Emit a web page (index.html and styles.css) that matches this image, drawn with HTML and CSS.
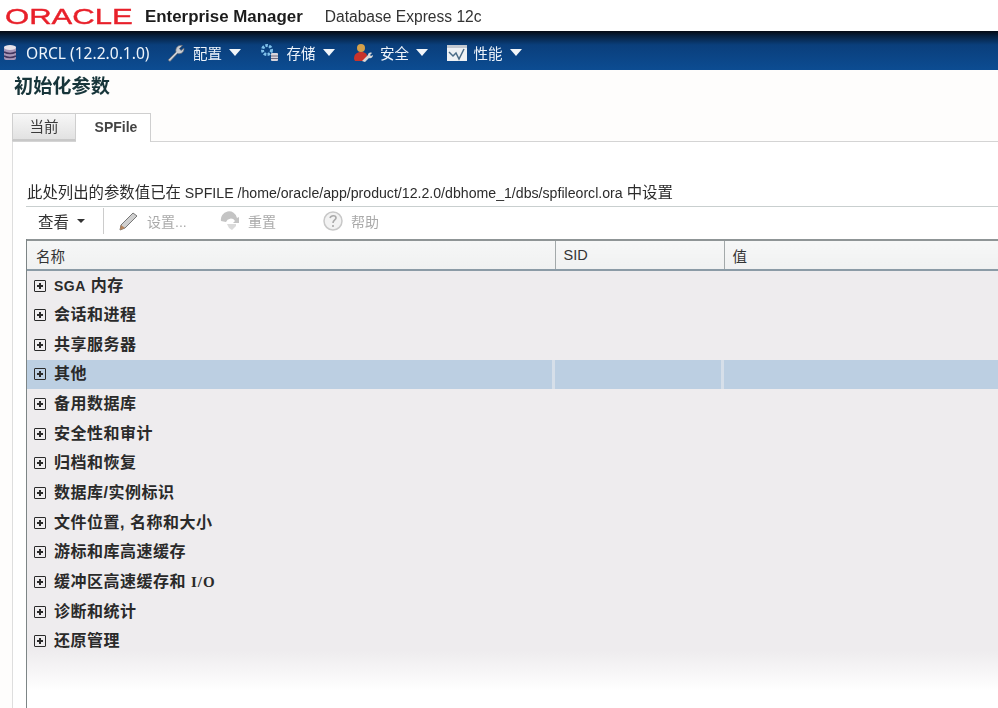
FILE: index.html
```html
<!DOCTYPE html>
<html lang="zh-CN">

<head>
    <meta charset="UTF-8">
    <meta name="viewport" content="width=device-width, initial-scale=1.0">
    <title>初始化参数</title>
    <link rel="stylesheet" href="styles.css">
</head>

<body>

    <!-- Brand bar -->
    <header class="brand-bar">
        <div class="logo-box"><span class="logo">ORACLE</span></div>
        <span class="brand-name">Enterprise Manager</span>
        <span class="brand-sub">Database Express 12c</span>
    </header>

    <!-- Main menu -->
    <nav class="menu-bar">
        <svg class="db-icon" viewBox="0 0 14 18">
            <rect x="1" y="2" width="12" height="14" rx="2" fill="#a897b8"/>
            <ellipse cx="7" cy="3.5" rx="6" ry="2.5" fill="#e6e2ea"/>
            <path d="M1 8q6 3 12 0M1 12q6 3 12 0" fill="none" stroke="#43355f" stroke-width="1.4"/>
        </svg>
        <span class="db-name">ORCL (12.2.0.1.0)</span>

        <div class="menu-item wrench-item">
            <svg class="menu-icon" viewBox="0 0 20 20">
                <path d="M2 17 L10 9 C9 5 12 1.500 16.500 2.500 L13.500 5.500 L15 7.500 L18 5 C18.500 9.500 14.500 11.500 11.500 10.500 L4 18.500 Z" fill="#c9ccd2" stroke="#59606b" stroke-width=".7"/>
            </svg>
            <span>配置</span><i class="caret"></i>
        </div>

        <div class="menu-item">
            <svg class="menu-icon" viewBox="0 0 20 20">
                <circle cx="7" cy="7" r="4.500" fill="none" stroke="#7fc0ea" stroke-width="3" stroke-dasharray="2.500 1.300"/>
                <rect x="11" y="10" width="7" height="8" rx="1" fill="#d8d5dc"/>
                <path d="M11 13h7M11 15.500h7" stroke="#6e6a80"/>
            </svg>
            <span>存储</span><i class="caret"></i>
        </div>

        <div class="menu-item">
            <svg class="menu-icon" viewBox="0 0 20 20">
                <circle cx="8" cy="5" r="4" fill="#d5a04a"/>
                <path d="M1 16c0-5 3-7 7-7s6 2 6 4l-3 5H2z" fill="#c8332b"/>
                <path d="M9 18l6-6c0-2 2-3 4-2l-2 2 1 1 2-1c0 2-2 4-4 3l-4 4z" fill="#d9d9d9"/>
            </svg>
            <span>安全</span><i class="caret"></i>
        </div>

        <div class="menu-item">
            <svg class="menu-icon" viewBox="0 0 20 20">
                <rect x="0" y="2" width="20" height="16" fill="#eef1f4"/>
                <rect x="0" y="2" width="20" height="3" fill="#c2c8d0"/>
                <path d="M2 9l4 4 3-3 3 6 5-10" fill="none" stroke="#4a6b86" stroke-width="1.500"/>
            </svg>
            <span>性能</span><i class="caret"></i>
        </div>
    </nav>

    <main class="page">
        <h1 class="page-title">初始化参数</h1>

        <div class="tabs">
            <div class="tab">当前</div>
            <div class="tab tab-active">SPFile</div>
        </div>

        <div class="panel">
            <p class="note"><span class="note-cjk">此处列出的参数值已在</span> SPFILE /home/oracle/app/product/12.2.0/dbhome_1/dbs/spfileorcl.ora <span class="note-cjk">中设置</span></p>

            <div class="toolbar">
                <div class="tool-view">查看<i class="caret-small"></i></div>
                <div class="tool-sep"></div>

                <div class="tool tool-set">
                    <svg class="pencil" viewBox="0 0 22 22">
                        <path d="M3 15 L15 3 L19 6 L7 18 L2 20 Z" fill="#cfcfcf" stroke="#777"/>
                        <path d="M2 20l1-5 4 3z" fill="#b5835a"/>
                    </svg>
                    <span>设置...</span>
                </div>

                <div class="tool tool-reset">
                    <svg class="tool-icon" viewBox="0 0 22 22">
                        <path d="M2 11a8 8 0 0 1 16-3l2-1v6h-6l2-2a5 5 0 0 0-9 1z" fill="#c4c4c4"/>
                        <path d="M8 14h9v2l-4 4-3-2z" fill="#dadada"/>
                    </svg>
                    <span>重置</span>
                </div>

                <div class="tool tool-help">
                    <svg class="tool-icon" viewBox="0 0 22 22">
                        <circle cx="11" cy="11" r="9" fill="#f2f2f2" stroke="#c8c8c8" stroke-width="1.500"/>
                        <path d="M8 8c1-3 6-3 6 0 0 2-3 2-3 5M11 15v2" fill="none" stroke="#a9a9a9" stroke-width="1.600"/>
                    </svg>
                    <span>帮助</span>
                </div>
            </div>

            <div class="grid">
                <table>
                    <thead>
                        <tr>
                            <th class="col-name">名称</th>
                            <th class="col-sid">SID</th>
                            <th>值</th>
                        </tr>
                    </thead>
                    <tbody id="gridBody"></tbody>
                </table>
            </div>
        </div>
    </main>

    <script>
        const groups = [
            '<span class="latin">SGA</span> 内存', "会话和进程", "共享服务器", "其他", "备用数据库",
            "安全性和审计", "归档和恢复", "数据库/实例标识", "文件位置, 名称和大小",
            "游标和库高速缓存", '缓冲区高速缓存和 <span class="latin-serif">I/O</span>', "诊断和统计", "还原管理"
        ];

        let gridBody = document.getElementById("gridBody");

        groups.forEach(name => {
            let row = document.createElement("tr");
            if (name === "其他") {
                row.className = "selected";
            }
            row.innerHTML = `
                <td><span class="expander"></span><span class="group-name">${name}</span></td>
                <td></td>
                <td></td>
                `;
            gridBody.appendChild(row);
        });
    </script>
</body>

</html>
```

FILE: styles.css
```css
/*--------------Page-------------*/
html,
body {
    height: 100%;
    margin: 0;
    overflow: hidden;
}

body {
    display: flex;
    flex-direction: column;
    background-color: #fff;
    font-family: "Liberation Sans", "Noto Sans CJK SC", sans-serif;
    color: #222;
    filter: blur(0.35px);
}

/*--------------Brand-------------*/
.brand-bar {
    display: flex;
    align-items: center;
    height: 31px;
    padding: 3px 0 0 5px;
    box-sizing: border-box;
    flex-shrink: 0;
}

.logo-box {
    width: 140px;
}

.logo {
    display: inline-block;
    font-size: 22.5px;
    line-height: 24px;
    color: #e8202a;
    -webkit-text-stroke: 0.4px #e8202a;
    transform: scaleX(1.38);
    transform-origin: left center;
}

.brand-name {
    font-size: 16.9px;
    font-weight: bold;
    color: #1c1c1c;
}

.brand-sub {
    margin-left: 22px;
    font-size: 15.6px;
    color: #333;
}

/*--------------Menu-------------*/
.menu-bar {
    display: flex;
    align-items: center;
    height: 39px;
    padding: 4px 0 0 3px;
    box-sizing: border-box;
    flex-shrink: 0;
    background: linear-gradient(#050a14 0, #06203f 5px, #0a3f7c 14px, #0c4c92 100%);
    color: #eef4fb;
    font-size: 14px;
}

.db-icon {
    width: 14px;
    height: 18px;
}

.db-name {
    margin-left: 9px;
    width: 140px;
    font-family: "Noto Sans", sans-serif;
    font-size: 15.6px;
    white-space: nowrap;
}

.menu-item {
    display: flex;
    align-items: center;
    margin-right: 18.5px;
}

.menu-item span {
    margin-left: 7px;
    width: 30px;
    font-size: 14.5px;
}

.menu-icon {
    width: 20px;
    height: 20px;
}

.caret {
    width: 0;
    height: 0;
    margin-left: 6px;
    border-left: 6.5px solid transparent;
    border-right: 6.5px solid transparent;
    border-top: 7px solid #f2f6fa;
}

/*--------------Title and tabs-------------*/
.page {
    flex: 1;
    display: flex;
    flex-direction: column;
    min-height: 0;
    padding-left: 12px;
    background-color: #fefdfc;
}

.page-title {
    margin: 5px 0 0 2px;
    height: 38px;
    font-size: 19.2px;
    line-height: 24px;
    font-weight: 700;
    color: #17353a;
}

.tabs {
    display: flex;
    height: 28px;
    border-bottom: 1px solid #d4d4d4;
    flex-shrink: 0;
}

.tab {
    width: 64px;
    height: 28px;
    box-sizing: border-box;
    border: 1px solid #cfcfcf;
    border-bottom: 2px solid #c8c8c8;
    background: linear-gradient(#f7f7f7, #e2e2e2);
    font-size: 14.5px;
    line-height: 26px;
    text-align: center;
    color: #3a3a3a;
}

.tab-active {
    width: 75px;
    height: 29px;
    padding-left: 6px;
    border-left: 0;
    border-bottom: 0;
    background: #fff;
    font-size: 14px;
    font-weight: bold;
    color: #444;
}

/*--------------Panel-------------*/
.panel {
    flex: 1;
    display: flex;
    flex-direction: column;
    min-height: 0;
    padding-left: 13px;
    border-left: 1px solid #dedede;
    background-color: #fff;
}

.note {
    margin: 41px 0 0;
    height: 23px;
    padding-left: 1px;
    border-bottom: 1px solid #c9cfcf;
    font-size: 14.15px;
    line-height: 20px;
    white-space: nowrap;
    color: #2c2c2c;
}

.note-cjk {
    font-size: 15.4px;
}

/*--------------Toolbar-------------*/
.toolbar {
    display: flex;
    align-items: center;
    height: 32px;
    padding-bottom: 4px;
    box-sizing: border-box;
    flex-shrink: 0;
    font-size: 14px;
    color: #aaa;
}

.tool-view {
    display: flex;
    align-items: center;
    width: 77px;
    padding-left: 12px;
    box-sizing: border-box;
    font-size: 15.5px;
    color: #333;
}

.caret-small {
    width: 0;
    height: 0;
    margin-left: 8px;
    border-left: 4px solid transparent;
    border-right: 4px solid transparent;
    border-top: 4px solid #333;
}

.tool-sep {
    width: 1px;
    height: 26px;
    background-color: #ccc;
}

.tool {
    display: flex;
    align-items: center;
    gap: 7px;
    filter: blur(0.5px);
}

.tool-set {
    margin-left: 14px;
    width: 101px;
    filter: none;
}

.tool-set span {
    filter: blur(0.5px);
}

.tool-reset {
    width: 103px;
}

.pencil,
.tool-icon {
    width: 22px;
    height: 22px;
}

/*--------------Grid-------------*/
.grid {
    flex: 1;
    min-height: 0;
    border-left: 1px solid #7d8586;
    background: linear-gradient(#eeecee 412px, #fff 452px);
}

table {
    width: 100%;
    border-collapse: collapse;
    table-layout: fixed;
}

th {
    height: 30px;
    padding: 0 0 0 8px;
    box-sizing: border-box;
    border-top: 2px solid #8f9596;
    border-right: 1px solid #a3a9aa;
    border-bottom: 2px solid #8b9ba6;
    background: linear-gradient(#f6f7f7, #f0f1f1);
    font-size: 14.5px;
    font-weight: normal;
    text-align: left;
    color: #333;
}

th:first-child {
    padding-left: 9px;
}

th:last-child {
    border-right: 0;
}

.col-name {
    width: 528px;
}

.col-sid {
    width: 169px;
}

td {
    height: 29.67px;
    padding: 0 0 3px;
    box-sizing: border-box;
}

td:first-child {
    padding-left: 7px;
}

/* blue band with a light strip at the column edge, starts 1px into the row */
.selected td {
    background:
        linear-gradient(#eeecee 1px, transparent 1px),
        linear-gradient(to left, #d6dfe9 3px, #bccfe2 3px);
}

.selected td:last-child {
    background:
        linear-gradient(#eeecee 1px, transparent 1px),
        #bccfe2;
}

.expander {
    display: inline-block;
    position: relative;
    width: 12px;
    height: 12px;
    box-sizing: border-box;
    margin-right: 8px;
    border: 1px solid #2a2a2a;
    border-radius: 1px;
    vertical-align: -1px;
}

/* plus sign inside the box */
.expander::before,
.expander::after {
    content: "";
    position: absolute;
    background-color: #2a2a2a;
}

.expander::before {
    left: 2px;
    top: 4px;
    width: 6px;
    height: 2px;
}

.expander::after {
    left: 4px;
    top: 2px;
    width: 2px;
    height: 6px;
}

.group-name {
    font-size: 16px;
    font-weight: bold;
    letter-spacing: 0.5px;
    color: #2a2a2a;
}

.latin {
    font-size: 14px;
}

.latin-serif {
    font-family: "Liberation Serif", serif;
    font-size: 15px;
    letter-spacing: 1px;
}
```
